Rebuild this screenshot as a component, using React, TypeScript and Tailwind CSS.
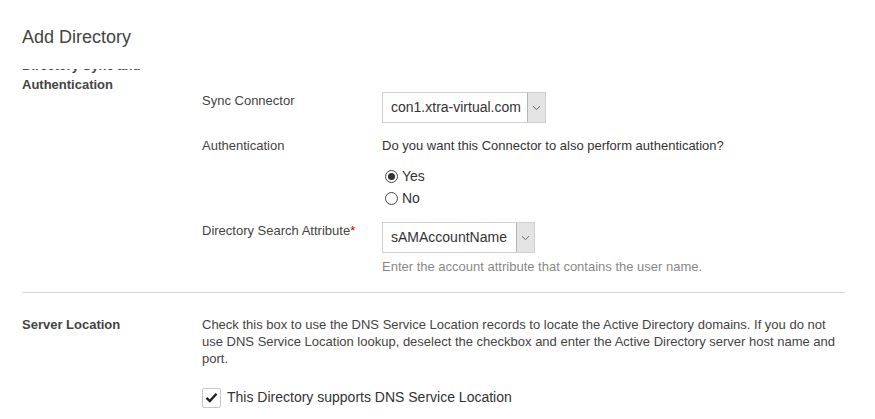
import React from "react";

function Chevron() {
  return (
    <svg width="9" height="6" viewBox="0 0 9 6" fill="none">
      <path d="M1 1.2 L4.5 4.6 L8 1.2" stroke="#666" strokeWidth="1" />
    </svg>
  );
}

function Select({ value, width }: { value: string; width: string }) {
  return (
    <div
      className={`flex h-[31px] ${width} items-stretch border border-[#cfcfcf] bg-white`}
    >
      <div className="flex flex-1 items-center pl-[8px] text-[14px] text-[#333]">
        {value}
      </div>
      <div className="flex w-[18px] items-center justify-center border-l border-[#b5b5b5] bg-[#e4e4e4]">
        <Chevron />
      </div>
    </div>
  );
}

function Radio({ checked, label }: { checked: boolean; label: string }) {
  return (
    <div className="flex h-[22px] items-center">
      <span className="ml-[3px] flex h-[13px] w-[13px] items-center justify-center rounded-full border border-[#444] bg-white">
        {checked && <span className="h-[7px] w-[7px] rounded-full bg-[#333]" />}
      </span>
      <span className="ml-[4px] text-[14px] text-[#333]">{label}</span>
    </div>
  );
}

export default function App() {
  return (
    <div
      className="h-[419px] w-[875px] overflow-hidden bg-white text-[#444]"
      style={{ fontFamily: '"Liberation Sans", Arial, sans-serif' }}
    >
      <div className="h-[69px] pl-[22px] pt-[26px]">
        <h1 className="text-[18px] leading-[22px] text-[#444]">Add Directory</h1>
      </div>

      <div className="h-[350px] overflow-hidden">
        <div className="-mt-[13px]">
          {/* Section 1 */}
          <div className="flex">
            <div className="w-[202px] shrink-0 pl-[22px] text-[13px] font-bold leading-[19px] text-[#444]">
              Directory Sync and
              <br />
              Authentication
            </div>
            <div className="flex-1">
              <p className="-mt-[3px] whitespace-nowrap text-[13px] leading-[17px] text-[#444]">
                Select the Connector that will handle the Active Directory traffic and also the identity sync for the directory.
              </p>

              {/* Sync Connector */}
              <div className="mt-[22px] flex items-start">
                <div className="w-[180px] shrink-0 text-[13px] leading-[17px]">
                  Sync Connector
                </div>
                <Select value="con1.xtra-virtual.com" width="w-[164px]" />
              </div>

              {/* Authentication */}
              <div className="mt-[14px] flex items-start">
                <div className="w-[180px] shrink-0 text-[13px] leading-[17px]">
                  Authentication
                </div>
                <div>
                  <p className="text-[13px] leading-[17px] text-[#333]">
                    Do you want this Connector to also perform authentication?
                  </p>
                  <div className="mt-[11px]">
                    <Radio checked label="Yes" />
                    <Radio checked={false} label="No" />
                  </div>
                </div>
              </div>

              {/* Directory Search Attribute */}
              <div className="mt-[13px] flex items-start">
                <div className="w-[180px] shrink-0 text-[13px] leading-[17px]">
                  Directory Search Attribute<span className="text-[#c00]">*</span>
                </div>
                <div>
                  <Select value="sAMAccountName" width="w-[153px]" />
                  <p className="mt-[5px] text-[13px] leading-[17px] text-[#888]">
                    Enter the account attribute that contains the user name.
                  </p>
                </div>
              </div>
            </div>
          </div>

          {/* Divider */}
          <div className="ml-[22px] mt-[17px] w-[823px] border-t border-[#d6d6d6]" />

          {/* Server Location */}
          <div className="mt-[23px] flex">
            <div className="w-[202px] shrink-0 pl-[22px] text-[13px] font-bold leading-[17px] text-[#444]">
              Server Location
            </div>
            <div className="flex-1">
              <p className="whitespace-nowrap text-[13px] leading-[17px] text-[#444]">
                Check this box to use the DNS Service Location records to locate the Active Directory domains. If you do not
                <br />
                use DNS Service Location lookup, deselect the checkbox and enter the Active Directory server host name and
                <br />
                port.
              </p>
              <div className="mt-[20px] flex items-center">
                <span className="flex h-[20px] w-[19px] items-center justify-center rounded-[2px] border border-[#c8c8c8] bg-white">
                  <svg width="13" height="11" viewBox="0 0 13 11">
                    <path d="M1.5 5.8 L4.8 9 L11.5 1.8" stroke="#222" strokeWidth="2.4" fill="none" />
                  </svg>
                </span>
                <span className="ml-[6px] text-[14px] text-[#333]">
                  This Directory supports DNS Service Location
                </span>
              </div>
            </div>
          </div>
        </div>
      </div>
    </div>
  );
}
